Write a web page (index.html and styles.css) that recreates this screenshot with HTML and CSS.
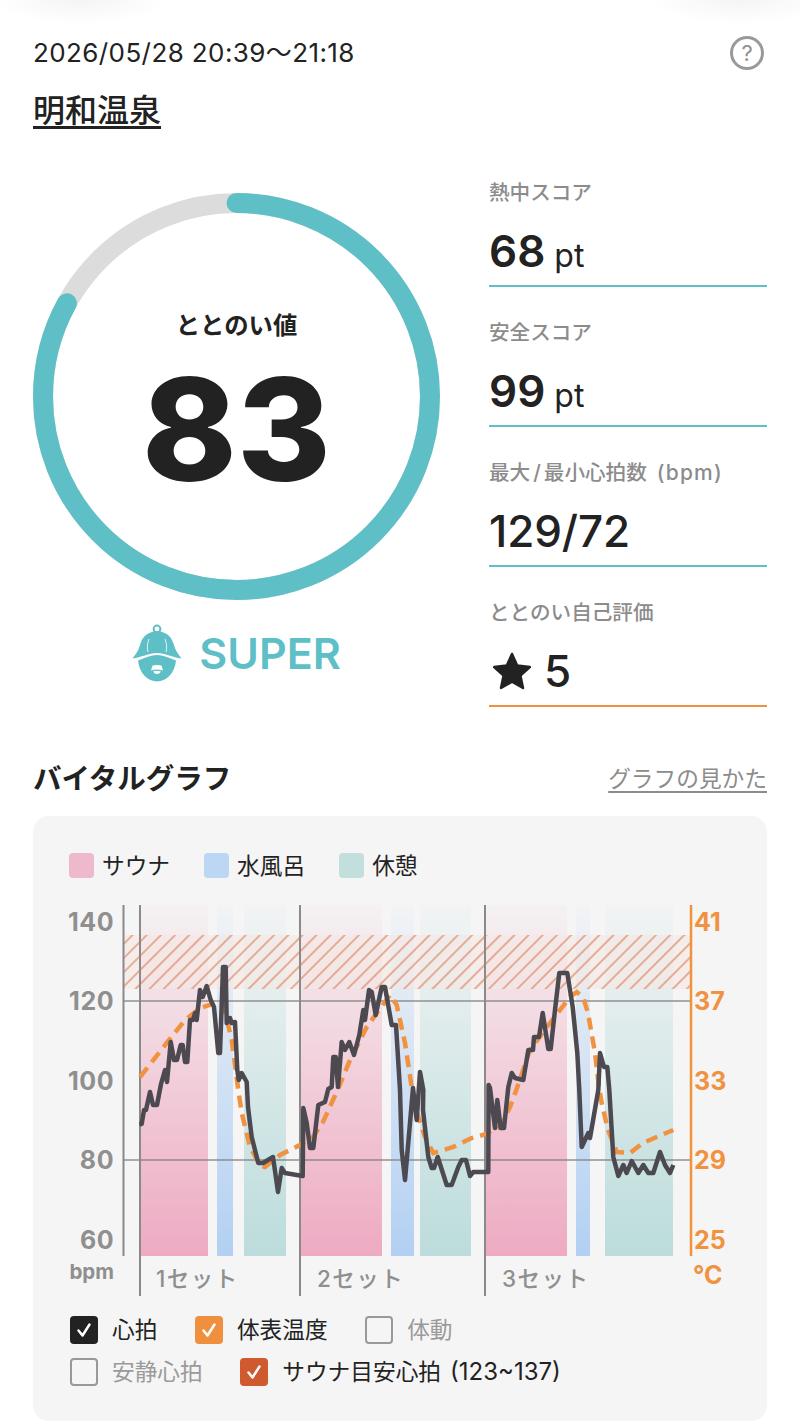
FILE: index.html
```html
<!DOCTYPE html>
<html lang="ja">
<head>
<meta charset="utf-8">
<title>明和温泉</title>
<link rel="stylesheet" href="styles.css">
</head>
<body>
<div class="shade shade-left"></div>
<div class="shade shade-right"></div>
<main class="page">
  <header class="head">
    <div class="date-row">
      <span class="date">2026/05/28 20:39～21:18</span>
      <span class="help">?</span>
    </div>
    <a class="place">明和温泉</a>
  </header>

  <section class="score">
    <div class="score-left">
      <svg class="gauge" viewBox="0 0 407 407" width="407" height="407">
        <circle cx="203.5" cy="203.5" r="193.5" class="gauge-bg"/>
        <circle cx="203.5" cy="203.5" r="193.5" class="gauge-val" pathLength="100" stroke-dasharray="83 100" transform="rotate(-90 203.5 203.5)"/>
        <text x="203.5" y="141" class="gauge-label">ととのい値</text>
        <text x="203.5" y="288" class="gauge-num">83</text>
      </svg>
      <div class="rank">
        <svg class="rank-icon" viewBox="0 0 50 60" width="50" height="60">
          <circle cx="25" cy="6" r="3.4" fill="none" stroke="#5fbfc7" stroke-width="2"/>
          <path d="M25 8C14 9 10 15 8 22C6.500 28 3 32 .5 35.500C9 34.500 17 30 25 30C33 30 41 34.500 49.500 35.500C47 32 43.500 28 42 22C40 15 36 9 25 8Z" fill="#5fbfc7"/>
          <path d="M6 37.500C13 34.500 19 32 25 32C31 32 37 34.500 44 37.500C43 50 34 58.500 25 58.500C16 58.500 7 50 6 37.500Z" fill="#5fbfc7"/>
          <path d="M20.500 42.500Q25 41.500 29.500 42.500L31 47.500Q25 45.500 19 47.500ZM21 48.500Q25 47 29 48.500Q27.500 51 25 51Q22.500 51 21 48.500Z" fill="#fff"/>
          <path d="M17 16C15 21 15 25 16 29M33 16C35 21 35 25 34 29" fill="none" stroke="#fff" stroke-width="1" opacity=".8"/>
        </svg>
        <span class="rank-text">SUPER</span>
      </div>
    </div>
    <div class="stats">
      <div class="stat">
        <div class="stat-label">熱中スコア</div>
        <div class="stat-value"><b>68</b> <span class="unit">pt</span></div>
      </div>
      <div class="stat">
        <div class="stat-label">安全スコア</div>
        <div class="stat-value"><b>99</b> <span class="unit">pt</span></div>
      </div>
      <div class="stat">
        <div class="stat-label">最大<span class="slash">/</span>最小心拍数<span class="paren">(bpm)</span></div>
        <div class="stat-value"><b class="ratio">129/72</b></div>
      </div>
      <div class="stat stat-self">
        <div class="stat-label">ととのい自己評価</div>
        <div class="stat-value">
          <svg class="star" viewBox="0 0 40 38" width="40" height="38"><path d="M20 2L25.200 13.600L37.800 15L28.400 23.500L31 36L20 29.700L9 36L11.600 23.500L2.200 15L14.800 13.600Z" fill="#222" stroke="#222" stroke-width="2.500" stroke-linejoin="round"/></svg>
          <b class="five">5</b>
        </div>
      </div>
    </div>
  </section>

  <div class="vital-head">
    <h2 class="vital-title">バイタルグラフ</h2>
    <a class="vital-link">グラフの見かた</a>
  </div>

  <section class="card">
    <ul class="legend">
      <li class="legend-item"><i class="swatch swatch-sauna"></i>サウナ</li>
      <li class="legend-item"><i class="swatch swatch-water"></i>水風呂</li>
      <li class="legend-item"><i class="swatch swatch-rest"></i>休憩</li>
    </ul>

    <svg class="chart" viewBox="60 900 680 400" width="680" height="400">
      <defs>
        <linearGradient id="gS" gradientUnits="userSpaceOnUse" x1="0" y1="905" x2="0" y2="1256">
          <stop offset="0" stop-color="#eeaac2" stop-opacity=".05"/>
          <stop offset="1" stop-color="#eeaac2"/>
        </linearGradient>
        <linearGradient id="gW" gradientUnits="userSpaceOnUse" x1="0" y1="905" x2="0" y2="1256">
          <stop offset="0" stop-color="#b2d0f3" stop-opacity=".05"/>
          <stop offset="1" stop-color="#b2d0f3"/>
        </linearGradient>
        <linearGradient id="gR" gradientUnits="userSpaceOnUse" x1="0" y1="905" x2="0" y2="1256">
          <stop offset="0" stop-color="#bcdcdc" stop-opacity=".05"/>
          <stop offset="1" stop-color="#bcdcdc"/>
        </linearGradient>
        <pattern id="hatch" width="10" height="10" patternUnits="userSpaceOnUse" patternTransform="rotate(-45)">
          <line x1="0" y1="5" x2="10" y2="5" stroke="#d9623a" stroke-opacity=".72" stroke-width="1.300"/>
        </pattern>
      </defs>

      <rect x="141" y="905" width="67" height="351" fill="url(#gS)"/>
      <rect x="217" y="905" width="16" height="351" fill="url(#gW)"/>
      <rect x="244" y="905" width="42" height="351" fill="url(#gR)"/>
      <rect x="301" y="905" width="81" height="351" fill="url(#gS)"/>
      <rect x="391" y="905" width="23" height="351" fill="url(#gW)"/>
      <rect x="420" y="905" width="51" height="351" fill="url(#gR)"/>
      <rect x="486" y="905" width="81" height="351" fill="url(#gS)"/>
      <rect x="576" y="905" width="14" height="351" fill="url(#gW)"/>
      <rect x="605" y="905" width="68" height="351" fill="url(#gR)"/>

      <rect x="124" y="935" width="566" height="54" fill="#f3e8e3" fill-opacity=".6"/>
      <rect x="124" y="935" width="566" height="54" fill="url(#hatch)"/>

      <line x1="124" y1="1001" x2="690" y2="1001" class="grid"/>
      <line x1="124" y1="1160" x2="690" y2="1160" class="grid"/>

      <line x1="123.500" y1="905" x2="123.500" y2="1256" class="axis"/>
      <line x1="140" y1="905" x2="140" y2="1296" class="axis"/>
      <line x1="300" y1="905" x2="300" y2="1296" class="axis"/>
      <line x1="485" y1="905" x2="485" y2="1296" class="axis"/>
      <line x1="691" y1="905" x2="691" y2="1256" class="axis-r"/>

      <polyline class="temp" points="140,1077 166.700,1043 185,1020 200,1008 218.300,1002 223.300,1005 231.700,1040 238.300,1090 241.700,1113 250,1147 260,1165 265,1167 280,1155 300,1145 313,1137 323,1122 338,1089 350,1060 366.700,1027 390,995 396.700,1005 405,1043 411.700,1087 415,1107 425,1137 433.300,1153 453.300,1147 471.700,1138 483,1135 500,1127 510,1107 517,1088 530,1050 550,1023 570,997 576.700,992 583,997 588,1013 595,1053 599,1087 601.700,1103 608,1130 616.700,1152 630,1153 643,1143 656.700,1137 673.300,1130"/>
      <polyline class="hr" points="139.300,1124.300 141.700,1124 144,1110 146,1110 150,1092 153,1105 157,1105 161,1084 165,1070 167,1082 170.700,1042 174,1060 177,1060 180.700,1045 182.700,1045 185,1062 187.300,1062 190,1020 193,1020 195,1013 196.700,1020 200,990 202.700,997 206.700,986 210.700,1000 214,1007 218.300,1053 220,1053 223,967 225.700,967 226.700,1023 230,1018 231.700,1023 235,1022 237.300,1070 238.700,1080 241.700,1073 246.700,1082 248,1107 251.700,1137 258.300,1163 263,1163 273,1157 278,1192 281.700,1168 285,1173 302.700,1176 303.300,1108 306.700,1123 310,1148 313.300,1148 318.300,1105 325,1102 328.300,1089 331.700,1087 333.300,1057 335.700,1057 338,1087 341.700,1042 345,1050 349.300,1042 354,1055 359.300,1035 363.300,1010 365,1020 369,990 371.700,992 375.700,1015 381.700,987 385,987 391.700,1025 396,1025 400,1090 401.700,1150 405,1180 410,1123 413,1088 416.700,1120 420,1072 423.300,1090 423,1110 428.300,1157 431.700,1168 434,1168 437.700,1157 446.700,1185 451.700,1185 458.300,1167 461.700,1160 466,1160 470,1176 473.300,1172 488.300,1172 488.600,1085 490,1088 495,1128 497.300,1100 500.700,1128 504,1128 508.300,1087 511.700,1073 515,1078 523.300,1080 528.300,1050 533,1050 534,1037 539,1037 542.700,1013 548.300,1049 550.700,1049 555,1010 559.300,973 567.300,973 572.700,1007 577.300,1053 579.300,1090 581.700,1147 588.300,1133 590,1138 598.300,1090 600,1053 604,1067 607.300,1067 609.300,1090 613.300,1157 618.300,1176 623.300,1165 626.700,1173 631.700,1161 638.300,1173 643.300,1165 648.300,1173 653.300,1173 660,1152 665,1165 670,1173 673.300,1165"/>

      <text x="114" y="931" class="tick">140</text>
      <text x="114" y="1010" class="tick">120</text>
      <text x="114" y="1090" class="tick">100</text>
      <text x="114" y="1169" class="tick">80</text>
      <text x="114" y="1249" class="tick">60</text>
      <text x="114" y="1279" class="bpm">bpm</text>
      <text x="156" y="1287" class="set">1セット</text>
      <text x="317" y="1287" class="set">2セット</text>
      <text x="502" y="1287" class="set">3セット</text>
      <text x="694" y="931" class="tick-r">41</text>
      <text x="694" y="1010" class="tick-r">37</text>
      <text x="694" y="1090" class="tick-r">33</text>
      <text x="694" y="1169" class="tick-r">29</text>
      <text x="694" y="1249" class="tick-r">25</text>
      <text x="693" y="1284" class="tick-r">°C</text>
    </svg>

    <div class="checks">
      <div class="check-row">
        <label class="check"><span class="box box-black"><svg viewBox="0 0 28 28" width="28" height="28"><path d="M8.500 14.500L12.500 19.500L19.500 8.500" class="tick-mark"/></svg></span>心拍</label>
        <label class="check"><span class="box box-orange"><svg viewBox="0 0 28 28" width="28" height="28"><path d="M8.500 14.500L12.500 19.500L19.500 8.500" class="tick-mark"/></svg></span>体表温度</label>
        <label class="check check-off"><span class="box box-empty"></span>体動</label>
      </div>
      <div class="check-row">
        <label class="check check-off"><span class="box box-empty"></span>安静心拍</label>
        <label class="check"><span class="box box-red"><svg viewBox="0 0 28 28" width="28" height="28"><path d="M8.500 14.500L12.500 19.500L19.500 8.500" class="tick-mark"/></svg></span><span>サウナ目安心拍<span class="range">(123~137)</span></span></label>
      </div>
    </div>
  </section>
</main>
</body>
</html>
```

FILE: styles.css
```css
* { box-sizing: border-box; }
html, body { margin: 0; padding: 0; background: #fff; }
body {
  font-family: Inter, "Noto Sans CJK JP", sans-serif;
  color: #222;
  height: 1421px;
  overflow: hidden;
  position: relative;
}
.shade {
  position: absolute;
  top: -26px;
  width: 180px;
  height: 50px;
  background: radial-gradient(closest-side, rgba(0,0,0,.045), rgba(0,0,0,0));
}
.shade-left { left: -10px; }
.shade-right { right: -30px; }

.page { padding: 37px 33px 0; }

.date-row {
  display: flex;
  justify-content: space-between;
  align-items: center;
  height: 32px;
}
.date { font-size: 26px; line-height: 32px; letter-spacing: .4px; }
.help {
  width: 34px;
  height: 34px;
  border: 3px solid #999;
  border-radius: 50%;
  color: #8f8f8f;
  font-size: 22px;
  line-height: 28px;
  text-align: center;
  margin-right: 3px;
}
.place {
  display: table;
  margin-top: 22px;
  font-size: 32px;
  line-height: 40px;
  font-weight: 500;
  text-decoration: underline;
  text-underline-offset: 4px;
  text-decoration-thickness: 2.500px;
}

.score { display: flex; gap: 49px; margin-top: 46px; }
.score-left { width: 407px; padding-top: 16px; }
.gauge { display: block; }
.gauge-bg, .gauge-val { fill: none; stroke-width: 20; }
.gauge-bg { stroke: #dcdcdc; }
.gauge-val { stroke: #5fbfc7; stroke-linecap: round; }
.gauge-label { font-size: 24.400px; font-weight: 700; text-anchor: middle; fill: #222; }
.gauge-num { font-size: 143px; font-weight: 800; text-anchor: middle; fill: #222; }
.rank {
  display: flex;
  justify-content: center;
  align-items: center;
  gap: 17px;
  margin-top: 23px;
}
.rank-icon { display: block; }
.rank-text { font-size: 43px; font-weight: 600; color: #5fbfc7; line-height: 60px; }

.stats { width: 278px; display: flex; flex-direction: column; gap: 30px; }
.stat { border-bottom: 2px solid #5fbfc7; padding-bottom: 4px; }
.stat-self { border-bottom-color: #f0903f; }
.stat-label { font-size: 20.600px; line-height: 32px; font-weight: 500; color: #8c8c8c; }
.slash { margin: 0 3px; }
.paren { margin-left: 10px; font-size: 21px; letter-spacing: 1.200px; }
.stat-value {
  display: flex;
  align-items: baseline;
  gap: 9px;
  height: 60px;
  margin-top: 12px;
  font-size: 44px;
  line-height: 60px;
}
.stat-value b { font-weight: 600; }
.stat-value .ratio { font-weight: 500; letter-spacing: -.1px; }
.unit { font-size: 32px; font-weight: 400; }
.star { margin-left: 3px; margin-right: 3px; display: block; align-self: center; }
.five { font-size: 44px; font-weight: 500 !important; }

.vital-head {
  display: flex;
  justify-content: space-between;
  align-items: center;
  margin-top: 52px;
  height: 40px;
}
.vital-title { margin: 0; font-size: 28.500px; line-height: 40px; font-weight: 700; }
.vital-link {
  font-size: 22.700px;
  line-height: 32px;
  color: #8c8c8c;
  text-decoration: underline;
  text-underline-offset: 4px;
}

.card {
  margin-top: 17px;
  background: #f5f5f5;
  border-radius: 16px;
  height: 605px;
  padding: 37px 36px 0;
}
.legend {
  display: flex;
  gap: 34px;
  margin: 0;
  padding: 0;
  list-style: none;
  height: 25px;
}
.legend-item {
  display: flex;
  align-items: center;
  gap: 8px;
  font-size: 22.700px;
  line-height: 25px;
}
.swatch { display: block; width: 25px; height: 25px; border-radius: 4px; }
.swatch-sauna { background: #efb9cd; }
.swatch-water { background: #bcd7f3; }
.swatch-rest { background: #c2dedd; }

.chart { display: block; margin: 22px 0 0 -9px; }
.grid { stroke: #7f7f7f; stroke-width: 1.500; stroke-opacity: .85; }
.axis { stroke: #8a8a8a; stroke-width: 2; }
.axis-r { stroke: #f0923f; stroke-width: 2.500; }
.temp {
  fill: none;
  stroke: #f0923f;
  stroke-width: 4.500;
  stroke-dasharray: 12 7;
}
.hr {
  fill: none;
  stroke: #4c4a50;
  stroke-width: 4.500;
  stroke-linejoin: round;
}
.tick { font-size: 25px; font-weight: 700; fill: #8f8f8f; text-anchor: end; letter-spacing: .5px; }
.bpm { font-size: 20.500px; font-weight: 700; fill: #8f8f8f; text-anchor: end; }
.set { font-size: 22.500px; font-weight: 500; fill: #8f8f8f; letter-spacing: 1.500px; }
.tick-r { font-size: 25px; font-weight: 700; fill: #f0923f; }

.checks {
  display: flex;
  flex-direction: column;
  gap: 14px;
  margin: 16px 0 0 1px;
}
.check-row { display: flex; gap: 37.500px; }
.check {
  display: flex;
  align-items: center;
  gap: 14px;
  font-size: 22.700px;
  line-height: 28px;
}
.range { margin-left: 9px; font-size: 24px; }
.check-off { color: #9a9a9a; }
.box { display: block; width: 28px; height: 28px; border-radius: 4px; flex: none; }
.box svg { display: block; }
.box-black { background: #222; }
.box-orange { background: #f0903f; }
.box-red { background: #cf5a2f; }
.box-empty { border: 2.500px solid #999; }
.tick-mark { fill: none; stroke: #fff; stroke-width: 2.500; stroke-linecap: round; stroke-linejoin: round; }
```
